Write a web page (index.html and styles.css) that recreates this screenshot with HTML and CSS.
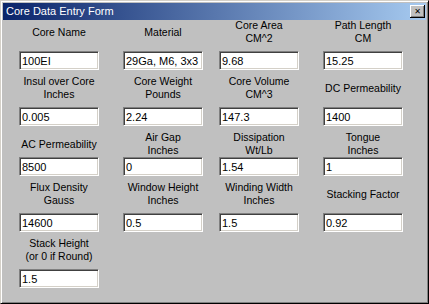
FILE: index.html
```html
<!DOCTYPE html>
<html lang="en">

<head>
    <meta charset="UTF-8">
    <title>Core Data Entry Form</title>
    <link rel="stylesheet" href="styles.css">
</head>

<body>

    <div class="window">
        <div class="title-bar">
            <span class="title">Core Data Entry Form</span>
            <button class="close-btn" type="button">&#x2715;</button>
        </div>

        <div class="client">
            <!-- Row 1 -->
            <div class="row">
                <div class="field">
                    <label class="caption">Core Name</label>
                    <input class="edit" type="text" value="100EI">
                </div>
                <div class="field">
                    <label class="caption">Material</label>
                    <input class="edit" type="text" value="29Ga, M6, 3x3">
                </div>
                <div class="field">
                    <label class="caption">Core Area<br>CM^2</label>
                    <input class="edit" type="text" value="9.68">
                </div>
                <div class="field">
                    <label class="caption">Path Length<br>CM</label>
                    <input class="edit" type="text" value="15.25">
                </div>
            </div>

            <!-- Row 2 -->
            <div class="row">
                <div class="field">
                    <label class="caption">Insul over Core<br>Inches</label>
                    <input class="edit" type="text" value="0.005">
                </div>
                <div class="field">
                    <label class="caption">Core Weight<br>Pounds</label>
                    <input class="edit" type="text" value="2.24">
                </div>
                <div class="field">
                    <label class="caption">Core Volume<br>CM^3</label>
                    <input class="edit" type="text" value="147.3">
                </div>
                <div class="field">
                    <label class="caption">DC Permeability</label>
                    <input class="edit" type="text" value="1400">
                </div>
            </div>

            <!-- Row 3 -->
            <div class="row row-tight">
                <div class="field">
                    <label class="caption">AC Permeability</label>
                    <input class="edit" type="text" value="8500">
                </div>
                <div class="field">
                    <label class="caption">Air Gap<br>Inches</label>
                    <input class="edit" type="text" value="0">
                </div>
                <div class="field">
                    <label class="caption">Dissipation<br>Wt/Lb</label>
                    <input class="edit" type="text" value="1.54">
                </div>
                <div class="field">
                    <label class="caption">Tongue<br>Inches</label>
                    <input class="edit" type="text" value="1">
                </div>
            </div>

            <!-- Row 4 -->
            <div class="row">
                <div class="field">
                    <label class="caption">Flux Density<br>Gauss</label>
                    <input class="edit" type="text" value="14600">
                </div>
                <div class="field">
                    <label class="caption">Window Height<br>Inches</label>
                    <input class="edit" type="text" value="0.5">
                </div>
                <div class="field">
                    <label class="caption">Winding Width<br>Inches</label>
                    <input class="edit" type="text" value="1.5">
                </div>
                <div class="field">
                    <label class="caption">Stacking Factor</label>
                    <input class="edit" type="text" value="0.92">
                </div>
            </div>

            <!-- Row 5 -->
            <div class="row">
                <div class="field">
                    <label class="caption">Stack Height<br>(or 0 if Round)</label>
                    <input class="edit" type="text" value="1.5">
                </div>
            </div>
        </div>
    </div>

</body>

</html>
```

FILE: styles.css
```css
/* General Reset */
* {
    margin: 0;
    padding: 0;
    box-sizing: border-box;
}

body {
    font-family: 'Liberation Sans', Arial, sans-serif;
    font-size: 11px;
    background-color: #c0c0c0;
    color: #000000;
}

/* Window frame */
.window {
    width: 429px;
    height: 304px;
    background: #c0c0c0;
    border-top: 1px solid #d4d0c8;
    border-left: 1px solid #d4d0c8;
    border-right: 1px solid #000000;
    border-bottom: 1px solid #000000;
    box-shadow: inset 1px 1px #ffffff, inset -1px -1px #808080;
    padding: 2px;
    display: flex;
    flex-direction: column;
}

/* Title bar */
.title-bar {
    height: 17px;
    background: linear-gradient(to right, #0a246a, #a6caf0);
    color: #ffffff;
    display: flex;
    align-items: center;
    padding: 0 1px 0 3px;
}

.title {
    font-size: 11px;
    line-height: 17px;
}

.close-btn {
    margin-left: auto;
    width: 15px;
    height: 13px;
    background: #c0c0c0;
    border: none;
    box-shadow: inset -1px -1px #000000, inset 1px 1px #ffffff, inset -2px -2px #808080;
    font-family: 'DejaVu Sans', sans-serif;
    font-size: 8px;
    font-weight: bold;
    line-height: 12px;
    color: #000000;
    text-align: center;
}

/* Form body */
.client {
    margin-top: -1px;
    padding: 0 0 0 2px;
    display: flex;
    flex-direction: column;
    gap: 5px;
}

.row {
    display: grid;
    grid-template-columns: 108px 100px 92px 116px;
}

.field {
    display: flex;
    flex-direction: column;
    align-items: center;
    gap: 6px;
}

.row-tight .field {
    gap: 0;
}

.caption {
    height: 26px;
    display: flex;
    align-items: center;
    justify-content: center;
    text-align: center;
    font-size: 10.5px;
    line-height: 13px;
    white-space: nowrap;
}

.edit {
    width: 80px;
    height: 19px;
    padding: 0 2px;
    font-family: 'Liberation Sans', Arial, sans-serif;
    font-size: 11px;
    color: #000000;
    background: #ffffff;
    border-top: 1px solid #808080;
    border-left: 1px solid #808080;
    border-right: 1px solid #ffffff;
    border-bottom: 1px solid #ffffff;
    box-shadow: inset 1px 1px #404040, inset -1px -1px #d4d0c8;
    outline: none;
}
```
